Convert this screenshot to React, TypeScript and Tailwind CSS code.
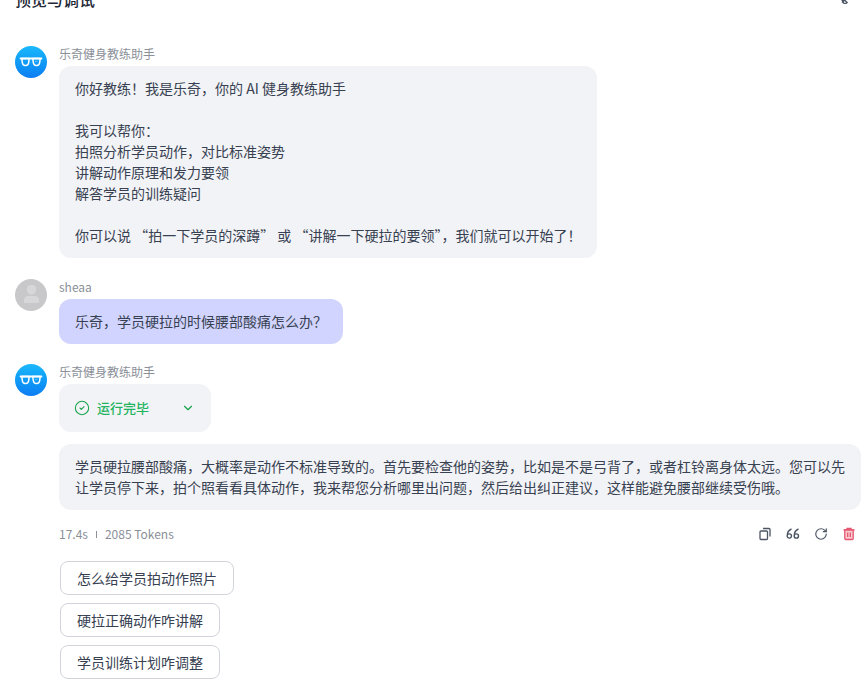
import { CircleCheck, ChevronDown, RotateCw } from 'lucide-react';

// ── Icons ─────────────────────────────────────────────────────────

function BotAvatar() {
  return (
    <div className="flex h-8 w-8 shrink-0 items-center justify-center rounded-full bg-gradient-to-b from-[#1cb8fb] to-[#0f7df2]">
      <svg width="24" height="12" viewBox="0 0 24 12" fill="none" stroke="#fff">
        <path d="M1.500 2.500h21" strokeWidth="1.800" strokeLinecap="round" />
        <path
          d="M2.800 2.500h7.400l-.5 4c-.2 1.700-1.200 3-2.900 3H6.200c-1.700 0-2.700-1.300-2.900-3zM13.800 2.500h7.400l-.5 4c-.2 1.700-1.200 3-2.900 3h-.6c-1.700 0-2.700-1.300-2.900-3z"
          strokeWidth="1.500"
          strokeLinejoin="round"
        />
        <path d="M16 6l1.500-1 1 1" strokeWidth="0.700" opacity="0.6" />
      </svg>
    </div>
  );
}

function UserAvatar() {
  return (
    <div className="flex h-8 w-8 shrink-0 items-center justify-center rounded-full bg-[#c8c8cb]">
      <svg width="32" height="32" viewBox="0 0 32 32" fill="#d7d7d9">
        <path d="M12 9.500c0-2 1.500-3.500 4.500-3.500s4.500 1.500 4.500 3.500v2c0 2.300-1.800 4-4.500 4s-4.500-1.700-4.500-4z" />
        <path d="M9 21c0-2.500 2-4 4-4h7c2 0 4 1.500 4 4v2c0 .6-.4 1-1 1H10c-.6 0-1-.4-1-1z" />
      </svg>
    </div>
  );
}

function CopyIcon() {
  return (
    <svg width="14" height="14" viewBox="0 0 14 14" fill="none" stroke="#4b5563" strokeWidth="1.300">
      <rect x="2" y="4" width="7.500" height="8.500" rx="1" />
      <path d="M5 1.500h6c.6 0 1 .4 1 1v7" />
    </svg>
  );
}

function QuoteIcon() {
  return (
    <svg width="14" height="14" viewBox="0 0 14 14" fill="none" stroke="#4b5563" strokeWidth="1.400">
      <path d="M5.500 2C3 3 1.200 5.500 1.200 9a2.150 2.150 0 1 0 4.300 0 2.150 2.150 0 0 0-4.300 0" />
      <path d="M12.500 2C10 3 8.200 5.500 8.200 9a2.150 2.150 0 1 0 4.300 0 2.150 2.150 0 0 0-4.300 0" />
    </svg>
  );
}

function TrashIcon() {
  return (
    <svg width="14" height="14" viewBox="0 0 14 14" fill="none" stroke="#e5566f" strokeWidth="1.300">
      <path d="M1.500 3h11M5 3V1.500h4V3" />
      <path d="M2.800 3v8.500c0 .6.400 1 1 1h6.400c.6 0 1-.4 1-1V3z" fill="#f9c9d2" />
      <path d="M5.700 5.500v4.500M8.300 5.500v4.500" />
    </svg>
  );
}

// ── Data ──────────────────────────────────────────────────────────

const suggestions = ['怎么给学员拍动作照片', '硬拉正确动作咋讲解', '学员训练计划咋调整'];

// ── Component ─────────────────────────────────────────────────────

export default function App() {
  return (
    <div className="h-[688px] w-[868px] overflow-hidden bg-white font-['Noto_Sans_CJK_SC','Noto_Sans',sans-serif] text-sm text-[#374151]">
      {/* Header, scrolled partly out of view */}
      <div className="-mt-[13px] flex h-[25px] items-start justify-between pl-[15px] pr-[20px]">
        <h2 className="text-base font-medium leading-[25px] text-[#1f2937]">预览与调试</h2>
        <svg width="10" height="17" viewBox="0 0 10 17" fill="none" stroke="#4b5563" strokeWidth="1.400">
          <path d="M0 9l6 6" />
          <path d="M6 12.500l3 3-2 1.500-2.500-2z" />
        </svg>
      </div>

      <div className="flex flex-col pl-[15px] pr-[7px] pt-[34px]">
        {/* Welcome message */}
        <div className="flex gap-3">
          <BotAvatar />
          <div className="min-w-0 flex-1">
            <div className="h-5 text-xs leading-[16px] text-[#8a8f98]">乐奇健身教练助手</div>
            <div className="w-[538px] rounded-xl bg-[#f2f3f6] px-4 py-3 leading-[21px]">
              <p>你好教练！我是乐奇，你的 AI 健身教练助手</p>
              <p className="mt-[21px]">我可以帮你：</p>
              <p>拍照分析学员动作，对比标准姿势</p>
              <p>讲解动作原理和发力要领</p>
              <p>解答学员的训练疑问</p>
              <p className="mt-[21px] whitespace-nowrap">你可以说 “拍一下学员的深蹲” 或 “讲解一下硬拉的要领”，我们就可以开始了！</p>
            </div>
          </div>
        </div>

        {/* User message */}
        <div className="mt-[21px] flex gap-3">
          <UserAvatar />
          <div className="min-w-0 flex-1">
            <div className="h-5 text-xs leading-[16px] text-[#8a8f98]">sheaa</div>
            <div className="w-fit rounded-xl bg-[#d1d4fe] px-4 py-3 leading-[21px]">
              乐奇，学员硬拉的时候腰部酸痛怎么办？
            </div>
          </div>
        </div>

        {/* Bot reply */}
        <div className="mt-5 flex gap-3">
          <BotAvatar />
          <div className="min-w-0 flex-1">
            <div className="h-5 text-xs leading-[16px] text-[#8a8f98]">乐奇健身教练助手</div>
            <div className="flex h-12 w-[152px] items-center rounded-xl bg-[#f2f3f6] pl-4 pr-4">
              <CircleCheck size={16} strokeWidth={1.600} className="-ml-px text-[#16a34a]" />
              <span className="ml-[7px] text-[13px] font-medium text-[#22b35e]">运行完毕</span>
              <ChevronDown size={14} className="ml-auto text-[#16a34a]" />
            </div>
            <div className="mt-3 rounded-xl bg-[#f2f3f6] px-4 py-3 leading-[21px]">
              学员硬拉腰部酸痛，大概率是动作不标准导致的。首先要检查他的姿势，比如是不是弓背了，或者杠铃离身体太远。您可以先让学员停下来，拍个照看看具体动作，我来帮您分析哪里出问题，然后给出纠正建议，这样能避免腰部继续受伤哦。
            </div>

            {/* Meta row */}
            <div className="mt-[14px] flex h-5 items-center justify-between pr-[5px] text-xs text-[#8a8f98]">
              <div className="flex items-center">
                <span>17.4s</span>
                <span className="mx-2 h-[7px] w-px bg-[#8a8f98]" />
                <span>2085 Tokens</span>
              </div>
              <div className="flex items-center gap-[14px] text-[#4b5563]">
                <CopyIcon />
                <QuoteIcon />
                <RotateCw size={14} />
                <TrashIcon />
              </div>
            </div>

            {/* Suggested questions */}
            <div className="mt-[17px] flex flex-col items-start gap-2 pl-px">
              {suggestions.map((text) => (
                <button
                  key={text}
                  className="h-[34px] rounded-lg border border-[#d1d5db] bg-white px-4 text-sm leading-none text-[#374151]"
                >
                  {text}
                </button>
              ))}
            </div>
          </div>
        </div>
      </div>
    </div>
  );
}
